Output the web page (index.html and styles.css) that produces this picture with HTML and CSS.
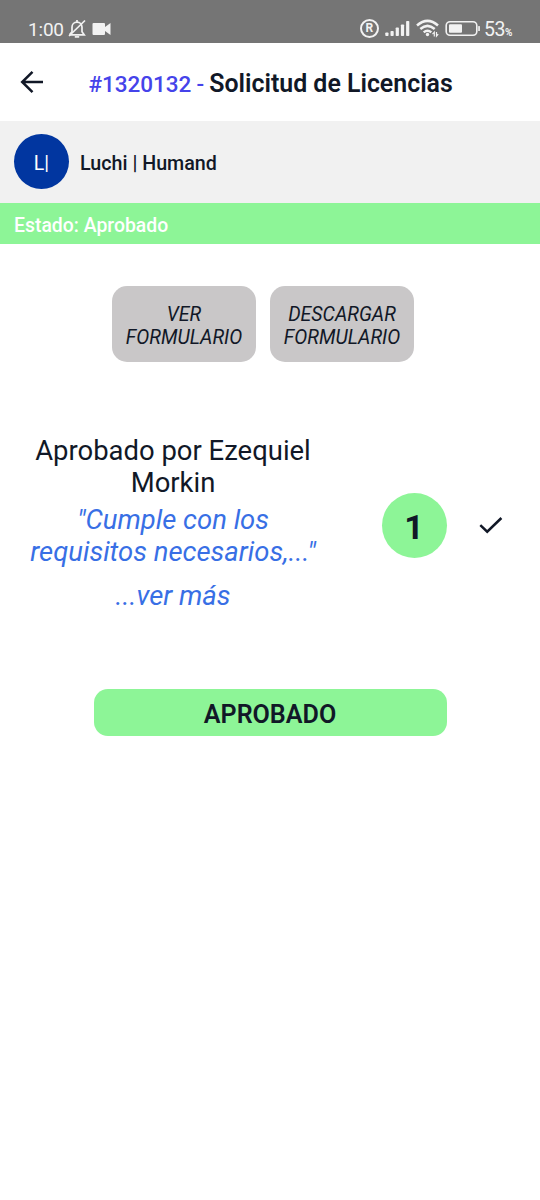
FILE: index.html
```html
<!DOCTYPE html>
<html lang="es">
<head>
<meta charset="utf-8">
<title>Solicitud de Licencias</title>
<link rel="stylesheet" href="styles.css">
</head>
<body>
<div class="statusbar">
  <span class="clock">1:00</span>
  <svg class="bell" width="18" height="20" viewBox="0 0 18 20" fill="none" stroke="#f2f2f2" stroke-width="1.7">
    <path d="M1.5 15.8H16.2L14 12.8V8.2C14 5.2 11.8 3.2 9 3.2S4 5.2 4 8.2V12.8L1.5 15.8M9 3V1"/>
    <path d="M17 1.5L1 17"/>
    <path d="M6.8 17.9H11.2"/>
  </svg>
  <svg class="camera" width="20" height="14" viewBox="0 0 20 14" fill="#f2f2f2">
    <path d="M1.5 1H12Q13 1 13 2V5L18.5 1V13L13 9V12Q13 13 12 13H1.5Q.5 13 .5 12V2Q.5 1 1.5 1Z"/>
  </svg>
  <div class="indicators">
    <span class="registered">R</span>
    <svg class="signal" width="25" height="17" viewBox="0 0 25 17" fill="#f2f2f2">
      <rect x=".3" y="12.5" width="3.2" height="3.5" rx=".8"/><rect x="5.5" y="11" width="3.2" height="5" rx=".8"/><rect x="10.7" y="7.5" width="3.2" height="8.5" rx=".8"/><rect x="15.9" y="4.5" width="3.2" height="11.5" rx=".8"/><rect x="21.1" y="1" width="3.2" height="15" rx=".8"/>
    </svg>
    <svg class="wifi" width="24" height="19" viewBox="0 0 24 19" fill="none" stroke="#f2f2f2" stroke-width="2.5">
      <path d="M1 6.5Q11.5 -2.8 22 6.5M4.3 10Q11.5 3.7 18.7 10M7.7 13.4Q11.5 10.2 15.3 13.4"/>
      <circle cx="11.5" cy="15.5" r="1.7" fill="#f2f2f2" stroke="none"/>
      <path d="M18.3 17.5V13.2L16.5 15.2M20.5 12.9V17.2L22.2 15.2" stroke-width="1.2"/>
    </svg>
    <svg class="battery" width="36" height="17" viewBox="0 0 36 17">
      <rect x="1.2" y="1.8" width="30.6" height="13.4" rx="3.8" fill="none" stroke="#f2f2f2" stroke-width="1.6"/>
      <rect x="4" y="4.3" width="13" height="8.4" rx="1" fill="#f2f2f2"/>
      <rect x="33.2" y="6" width="1.7" height="5" rx=".6" fill="#f2f2f2"/>
    </svg>
    <span class="level">53<small>%</small></span>
  </div>
</div>
<header class="header">
  <svg class="back" width="24" height="24" viewBox="0 0 24 24" fill="none" stroke="#111827" stroke-width="2.5">
    <path d="M23 12H2.5M12.5 1.8L2.2 12L12.5 22.2"/>
  </svg>
  <h1 class="title"><span class="ticket">#1320132 - </span><span class="subject">Solicitud de Licencias</span></h1>
</header>
<section class="user">
  <div class="avatar">L|</div>
  <div class="name">Luchi | Humand</div>
</section>
<div class="state">Estado: Aprobado</div>
<main>
  <div class="actions">
    <button class="action">VER<br>FORMULARIO</button>
    <button class="action">DESCARGAR<br>FORMULARIO</button>
  </div>
  <section class="step">
    <div class="details">
      <p class="approver">Aprobado por Ezequiel<br>Morkin</p>
      <p class="comment">"Cumple con los<br>requisitos necesarios,..."</p>
      <p class="more">...ver más</p>
    </div>
    <div class="number">1</div>
    <svg class="check" width="26" height="20" viewBox="0 0 26 20" fill="none" stroke="#111827" stroke-width="2.5">
      <path d="M2.3 10.2L9.2 16.7L23.4 3"/>
    </svg>
  </section>
  <div class="result">APROBADO</div>
</main>
</body>
</html>
```

FILE: styles.css
```css
* { box-sizing: border-box; }
body { margin: 0; min-height: 1200px; background: #fff; color: #111827; font-family: Roboto, sans-serif; }
p, h1 { margin: 0; }

.statusbar { display: flex; height: 43px; padding: 15px 28px 0 28px; background: #757575; color: #f2f2f2; }
.clock { width: 40px; font-size: 19px; line-height: 29px; letter-spacing: -.2px; }
.bell { margin-top: 4px; }
.camera { margin: 7px 0 0 6px; }
.indicators { display: flex; margin-left: auto; }
.registered { width: 19px; height: 19px; margin-top: 4px; border: 2px solid #f2f2f2; border-radius: 50%; font-size: 12px; font-weight: 700; line-height: 15px; text-align: center; }
.signal { margin: 5px 0 0 6px; }
.wifi { margin: 4px 0 0 6px; }
.battery { margin: 5px 0 0 5px; }
.level { margin-left: 3px; font-size: 19.5px; font-weight: 450; line-height: 29px; letter-spacing: -.4px; white-space: nowrap; }
.level small { font-size: 10px; font-weight: 700; }

.header { display: flex; height: 78px; padding: 0 20px; align-items: center; }
.back { flex: none; margin-bottom: 1px; }
.title { margin: 3px 0 0 44.5px; font-size: 24.9px; line-height: 30px; white-space: nowrap; }
.ticket { color: #4543ea; font-size: 22.5px; font-weight: 475; letter-spacing: -.05px; word-spacing: -.3px; }
.subject { font-weight: 600; }

.user { display: flex; height: 82px; padding-left: 14px; align-items: center; background: #f1f1f1; }
.avatar { width: 55px; height: 55px; margin-top: -1px; border-radius: 50%; background: #0136a0; color: #fff; font-size: 19.5px; font-weight: 450; line-height: 59px; text-align: center; }
.name { margin-left: 11px; padding-top: 2px; font-size: 19.7px; font-weight: 500; }
.state { height: 41px; padding-left: 14px; background: #8df597; color: #fff; font-size: 19.4px; font-weight: 500; line-height: 45px; }

.actions { display: flex; justify-content: center; gap: 14px; padding: 42px 14px 0 0; }
.action { width: 144px; height: 76px; padding: 3px 0 0; border: 0; border-radius: 15px; background: #c9c7c8; color: #111827; font: italic 400 19.5px/23px Roboto, sans-serif; }
.step { display: flex; align-items: center; margin-top: 73px; }
.details { width: 346px; font-size: 27.45px; line-height: 32px; text-align: center; }
.comment, .more { color: #386fe5; font-style: italic; }
.comment { margin-top: 5px; }
.more { margin-top: 12px; }
.number { width: 65px; height: 65px; margin: 4px 0 0 35.5px; border-radius: 50%; background: #8df597; font-size: 34px; font-weight: 700; line-height: 69px; text-align: center; }
.check { margin: 2px 0 0 31px; }
.result { width: 353px; height: 47px; margin: 77px auto 0; border-radius: 14px; background: #8df597; font-size: 25.1px; font-weight: 600; line-height: 51px; text-align: center; }
```
